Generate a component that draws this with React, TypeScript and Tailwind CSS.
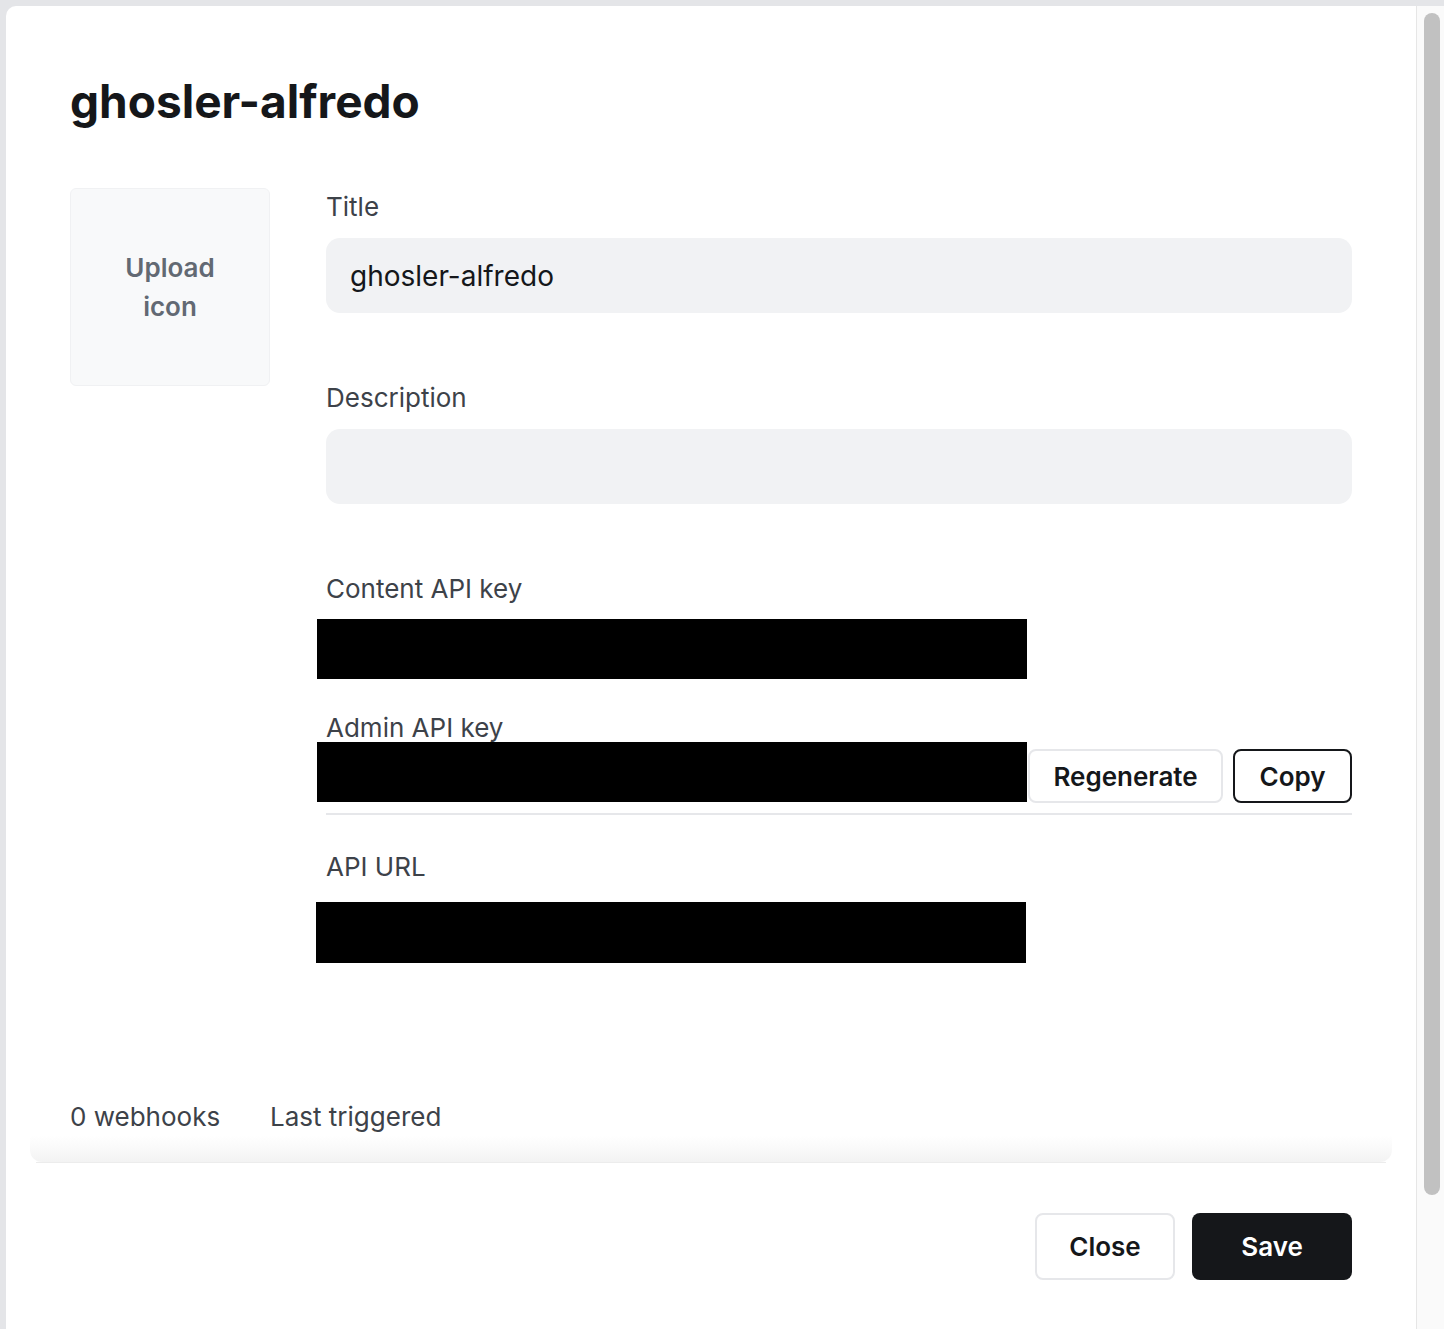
import React from "react";

const font = { fontFamily: "Inter, 'Noto Sans', sans-serif" };

function Label({ children }: { children: React.ReactNode }) {
  return <div className="text-[26px] leading-[36px] text-[#3d4249]">{children}</div>;
}

function Redacted({ className = "" }: { className?: string }) {
  return <div className={`h-[60px] w-[710px] bg-black ${className}`} />;
}

export default function App() {
  return (
    <div style={font} className="flex h-[1329px] w-[1444px] flex-col overflow-hidden bg-[#e4e5e8] pl-[6px] pt-[6px]">
      <div className="flex min-h-0 flex-1 overflow-hidden rounded-tl-[10px] bg-white">
        {/* modal body */}
        <div className="flex min-w-0 flex-1 flex-col">
          <div className="flex flex-1 flex-col px-[64px] pt-[70px]">
            <h1 className="text-[46px] font-bold leading-[50px] text-[#15171a]">ghosler-alfredo</h1>

            <div className="mt-[62px] flex gap-[56px]">
              <div className="flex h-[198px] w-[200px] shrink-0 items-center justify-center rounded-[6px] border border-[#f0f1f3] bg-[#f8f9fa] text-center text-[26px] font-semibold leading-[39px] text-[#626973]">
                Upload
                <br />
                icon
              </div>

              <div className="flex min-w-0 flex-1 flex-col">
                <div className="mt-px">
                  <Label>Title</Label>
                </div>
                <div className="mt-[13px] flex h-[75px] items-center rounded-[14px] bg-[#f1f2f4] px-[24px] text-[28px] text-[#15171a]">
                  ghosler-alfredo
                </div>

                <div className="mt-[67px]">
                  <Label>Description</Label>
                </div>
                <div className="mt-[13px] h-[75px] rounded-[14px] bg-[#f1f2f4]" />

                <div className="mt-[67px]">
                  <Label>Content API key</Label>
                </div>
                <Redacted className="ml-[-9px] mt-[12px]" />

                <div className="mt-[31px]">
                  <Label>Admin API key</Label>
                </div>
                <div className="mt-[-4px] flex items-start">
                  <Redacted className="ml-[-9px]" />
                  <div className="ml-auto mt-[7px] flex gap-[10px]">
                    <button className="flex h-[54px] w-[195px] items-center justify-center rounded-[8px] border-2 border-[#e6e7ea] text-[26px] font-semibold text-[#15171a]">
                      Regenerate
                    </button>
                    <button className="flex h-[54px] w-[119px] items-center justify-center rounded-[8px] border-2 border-[#15171a] text-[26px] font-semibold text-[#15171a]">
                      Copy
                    </button>
                  </div>
                </div>
                <div className="mt-[10px] h-[2px] bg-[#e6e7ea]" />

                <div className="mt-[34px]">
                  <Label>API URL</Label>
                </div>
                <Redacted className="ml-[-10px] mt-[17px] h-[61px]" />
              </div>
            </div>

            <div className="mt-[136px] flex text-[26px] leading-[36px] text-[#3d4249]">
              <div className="w-[200px]">0 webhooks</div>
              <div>Last triggered</div>
            </div>
          </div>

          {/* footer */}
          <div className="relative flex h-[167px] shrink-0 justify-end gap-[17px] bg-white px-[64px] pt-[51px]">
            <div className="absolute left-[24px] right-[24px] top-[-26px] h-[26px] rounded-b-[12px] bg-gradient-to-b from-transparent to-[#f3f3f3]" />
            <div className="absolute left-[30px] right-[30px] top-0 h-px bg-[#ececec]" />
            <button className="flex h-[67px] w-[140px] items-center justify-center rounded-[8px] border-2 border-[#e6e7ea] bg-white text-[26px] font-semibold text-[#15171a]">
              Close
            </button>
            <button className="flex h-[67px] w-[160px] items-center justify-center rounded-[8px] bg-[#15171a] text-[26px] font-semibold text-white">
              Save
            </button>
          </div>
        </div>

        {/* scrollbar */}
        <div className="w-[28px] shrink-0 border-l border-[#e6e6e6] bg-[#fafafa] pl-[7px] pr-[4px] pt-[7px]">
          <div className="h-[1182px] w-[16px] rounded-full bg-[#c1c1c1]" />
        </div>
      </div>
    </div>
  );
}
